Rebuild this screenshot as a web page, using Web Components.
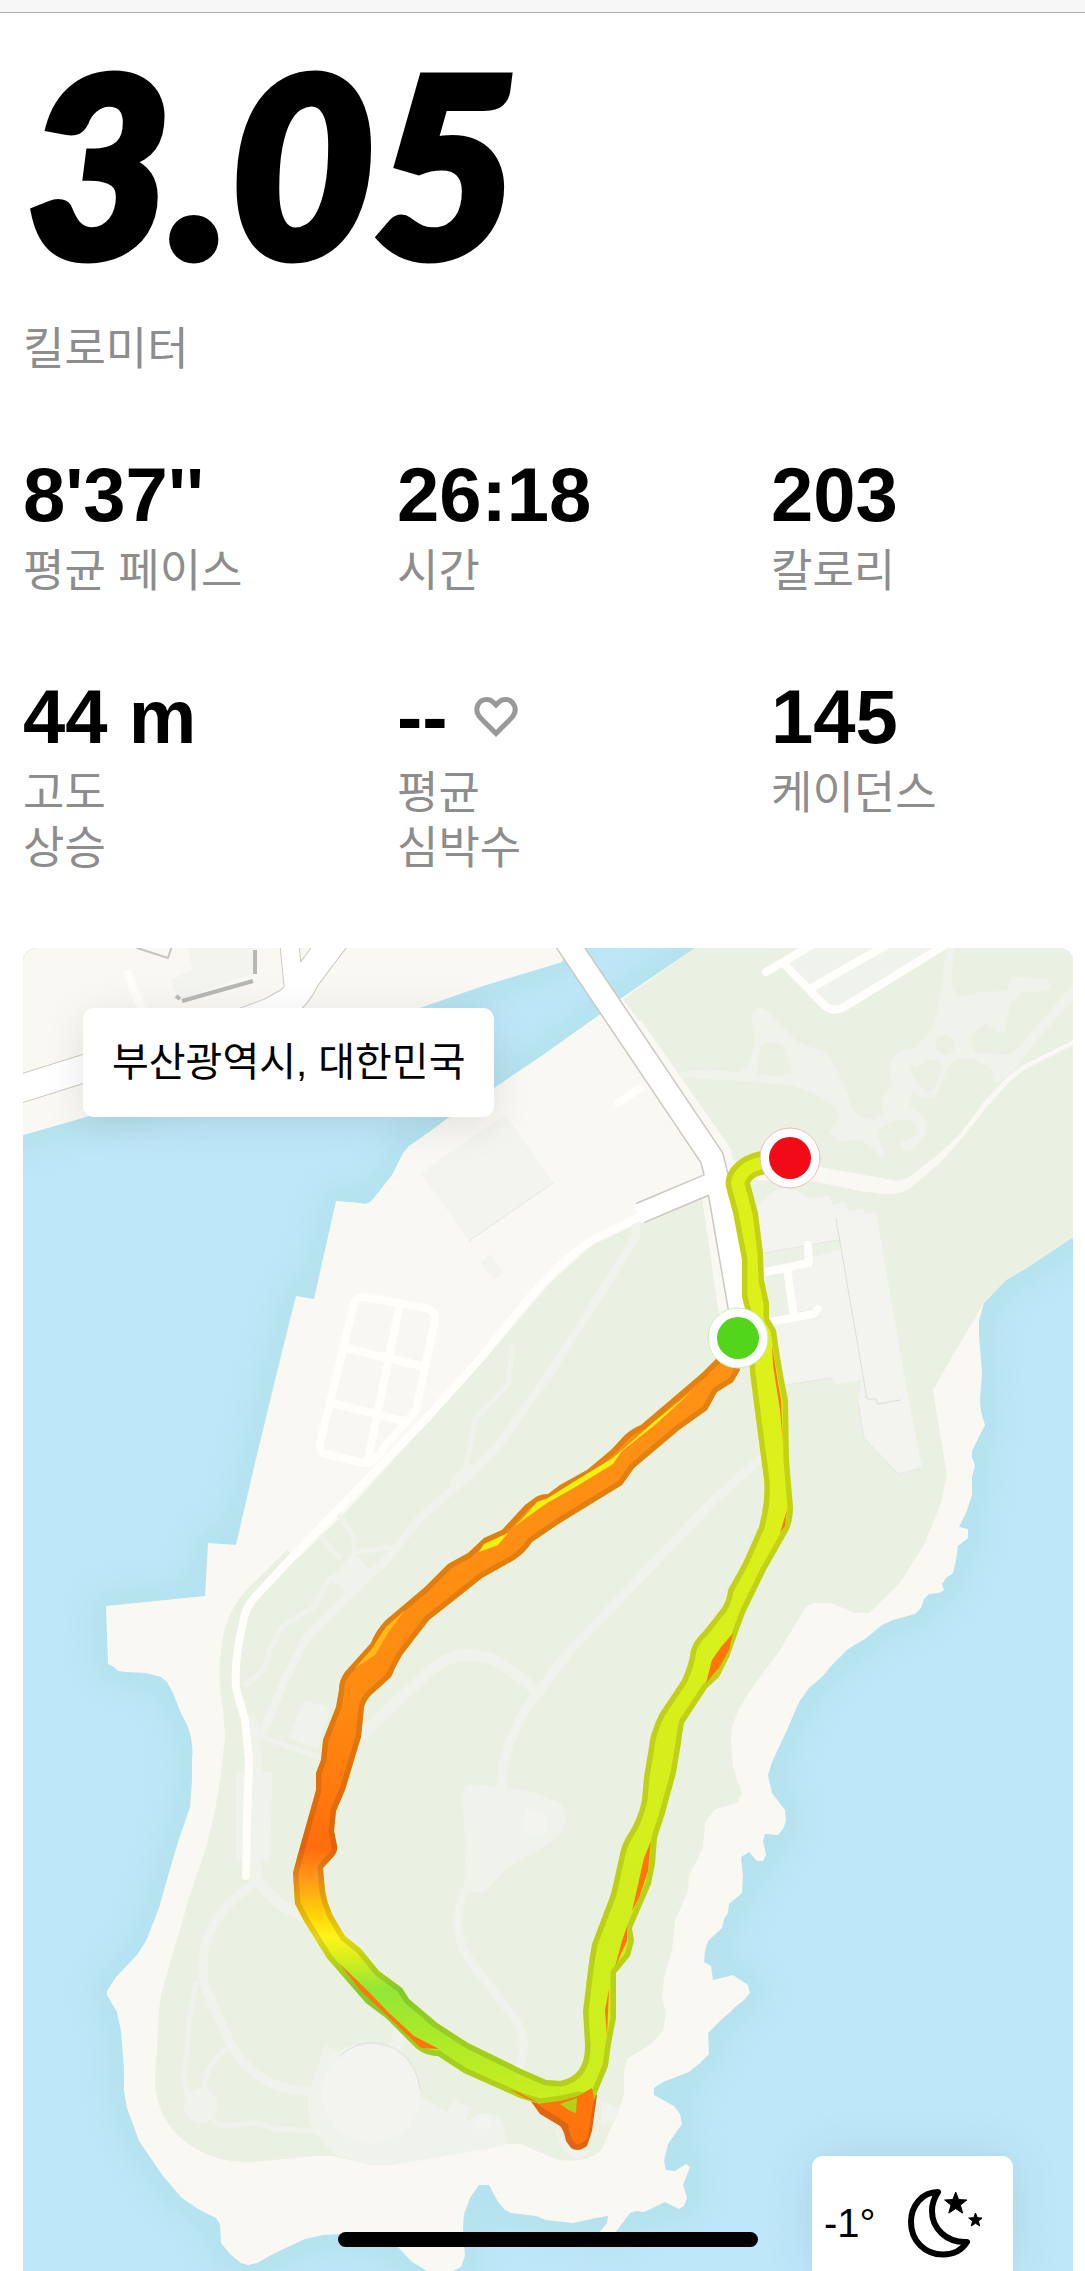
<!DOCTYPE html>
<html lang="ko">
<head>
<meta charset="utf-8">
<meta name="viewport" content="width=device-width, initial-scale=1">
<title>러닝 기록</title>
<style>
    body {
        margin: 0;
        background: #fff;
        color: #000;
        font-family: "Liberation Sans", "Noto Sans CJK KR", sans-serif;
    }
</style>
</head>
<body>
<run-summary>
    <run-distance slot="distance" value="3.05">킬로미터</run-distance>
    <run-stat value="8'37''">평균 페이스</run-stat>
    <run-stat value="26:18">시간</run-stat>
    <run-stat value="203">칼로리</run-stat>
    <run-stat value="44 m">고도<br>상승</run-stat>
    <run-stat value="--"><heart-icon slot="icon"></heart-icon>평균<br>심박수</run-stat>
    <run-stat value="145">케이던스</run-stat>
    <run-map slot="map">
        <span slot="place">부산광역시, 대한민국</span>
        <weather-card slot="weather">-1°</weather-card>
    </run-map>
</run-summary>

<script>
class RunSummary extends HTMLElement {
    constructor() {
        super();
        this.attachShadow({ mode: 'open' });
    }

    connectedCallback() {
        this.shadowRoot.innerHTML = `
            <style>
                :host { display: block; }
                header {
                    height: 12px;
                    background: #f7f7f7;
                    border-bottom: 1px solid #b2b2b2;
                }
                main { padding: 28px 12px 0 23px; }
                .stats {
                    display: grid;
                    grid-template-columns: repeat(3, minmax(0, 1fr));
                    gap: 72px;
                    padding: 72px 0;
                }
            </style>
            <header></header>
            <main>
                <slot name="distance"></slot>
                <section class="stats"><slot></slot></section>
                <slot name="map"></slot>
            </main>
        `;
    }
}

class RunDistance extends HTMLElement {
    constructor() {
        super();
        this.attachShadow({ mode: 'open' });
    }

    connectedCallback() {
        this.shadowRoot.innerHTML = `
            <style>
                :host {
                    display: flex;
                    flex-direction: column;
                    gap: 41px;
                }
                h1 {
                    margin: 0;
                    padding-left: 4px;
                    font: italic 900 248px/240px Lato, sans-serif;
                    -webkit-text-stroke: 9px #000;
                }
                p {
                    margin: 0;
                    color: #8d8d8d;
                    font-size: 45px;
                    line-height: 55px;
                }
            </style>
            <h1>${this.getAttribute('value')}</h1>
            <p><slot></slot></p>
        `;
    }
}

class RunStat extends HTMLElement {
    constructor() {
        super();
        this.attachShadow({ mode: 'open' });
    }

    connectedCallback() {
        this.shadowRoot.innerHTML = `
            <style>
                :host {
                    display: flex;
                    flex-direction: column;
                    gap: 3px;
                }
                .value {
                    display: flex;
                    align-items: center;
                    gap: 26px;
                    font-size: 76px;
                    font-weight: bold;
                    line-height: 92px;
                }
                .label {
                    color: #8d8d8d;
                    font-size: 45px;
                    line-height: 55px;
                }
            </style>
            <div class="value">${this.getAttribute('value')}<slot name="icon"></slot></div>
            <div class="label"><slot></slot></div>
        `;
    }
}

class HeartIcon extends HTMLElement {
    constructor() {
        super();
        this.attachShadow({ mode: 'open' });
    }

    connectedCallback() {
        this.shadowRoot.innerHTML = `
            <style>
                :host, svg { display: block; }
            </style>
            <svg width="44" height="42" viewBox="0 0 44 42" fill="none" stroke="#999" stroke-width="5">
                <path d="M22 37.500 7.500 23C2.500 18 2 14 3.500 10 6 3 14.500 1.500 19 6l3 3 3-3c4.500-4.500 13-3 15.500 4 1.500 4 1 8-4 13z"/>
            </svg>
        `;
    }
}

class WeatherCard extends HTMLElement {
    constructor() {
        super();
        this.attachShadow({ mode: 'open' });
    }

    connectedCallback() {
        this.shadowRoot.innerHTML = `
            <style>
                :host {
                    display: flex;
                    align-items: center;
                    gap: 30px;
                    box-sizing: border-box;
                    width: 201px;
                    height: 115px;
                    padding: 20px 12px 0;
                    border-radius: 11px 11px 0 0;
                    background: #fff;
                    box-shadow: 0 0 50px rgba(0, 0, 0, .1);
                    font-size: 40px;
                }
                svg { display: block; }
            </style>
            <span><slot></slot></span>
            <svg width="76" height="72" viewBox="906 2188 76 72">
                <path d="M938 2192C922 2192 911 2206 911 2222 911 2241 925 2254.500 943 2254.500 953 2254.500 962 2250 967 2242 946 2243 932 2228 932 2211 932 2203 934 2198 938 2192z" fill="none" stroke="#000" stroke-width="6" stroke-linejoin="round"/>
                <path stroke="#000" stroke-linejoin="round" d="M955.700 2192l2.900 7.600 8.200.4-6.400 5.100 2.200 8-6.900-4.500-6.900 4.500 2.200-8-6.400-5.100 8.200-.4zM975.500 2213l1.800 4.700 5 .3-3.900 3.100 1.300 4.900-4.200-2.800-4.200 2.800 1.300-4.900-3.900-3.100 5-.3z"/>
            </svg>
        `;
    }
}

class RunMap extends HTMLElement {
    constructor() {
        super();
        this.attachShadow({ mode: 'open' });
    }

    connectedCallback() {
        this.shadowRoot.innerHTML = `
            <style>
                :host {
                    display: block;
                    position: relative;
                    aspect-ratio: 1050 / 1323;
                    overflow: hidden;
                    border-radius: 14px 14px 0 0;
                    background: #bee8fa;
                }
                svg {
                    display: block;
                    width: 100%;
                    height: 100%;
                }
                .place {
                    position: absolute;
                    top: 60px;
                    left: 60px;
                    padding: 0 29px;
                    border-radius: 11px;
                    background: #fff;
                    box-shadow: 0 8px 40px rgba(0, 0, 0, .1);
                    font-size: 40px;
                    line-height: 109px;
                }
                .weather {
                    position: absolute;
                    right: 60px;
                    bottom: 0;
                }
                .home {
                    position: absolute;
                    right: 30%;
                    bottom: 24px;
                    left: 30%;
                    height: 15px;
                    border-radius: 8px;
                    background: #000;
                }
            </style>
            <svg viewBox="23 948 1050 1323" preserveAspectRatio="xMidYMin slice" fill="none" stroke-linecap="round" stroke-linejoin="round">
                <defs>
                    <filter id="soft" x="-10%" y="-10%" width="120%" height="120%"><feGaussianBlur stdDeviation="14"/></filter>
                    <path id="mainland" d="M10 930V1139L86 1117 420 1008 480 987 562 962 575 930z"/>
                    <path id="island" d="M725 930L695 948 620 999 599 1015 540 1057 494 1088 448 1118 429 1132 409 1146 403 1153 392 1175 373 1199Q367 1206 361 1203L336 1201 314 1299 296 1296 280 1360 255 1463 236 1545 208 1543 205 1596 106 1606 108 1664 114 1667 118 1671 126 1672 146 1673 161 1677 167 1682 173 1693 180 1711 188 1727Q194 1745 192 1760L192 1780 190 1807 179 1839 170 1869 159 1908 146 1941 137 1955 116 1977 107 1991V1995L117 2012 121 2031 124 2068V2091L127 2108 139 2141 163 2176 182 2198 198 2209 216 2218 220 2224 221 2243 230 2254 241 2263 248 2265 257 2263 275 2253 305 2239 323 2235 343 2234 398 2247 411 2261 427 2271 445 2275 461 2267 465 2256 463 2228 464 2214 470 2198 479 2185H489L498 2202 505 2210 511 2213 536 2216 546 2220 573 2223 596 2218 608 2216 607 2223 599 2233H615L630 2213 636 2211 644 2212 665 2202 679 2209 684 2206 687 2198 683 2185 690 2167 686 2164 675 2171 666 2170 664 2161 668 2144 682 2124 680 2114 674 2106 654 2095V2088L663 2082 689 2072 700 2063 709 2054 708 2033 721 2020 729 2013 735 2007 743 2001 750 1993 748 1985 733 1975 713 1980 711 1966 704 1962 705 1951 708 1941 722 1928 724 1919 728 1913 729 1904 742 1893 743 1876 741 1857 749 1852 757 1861H763L766 1855 763 1841 765 1834 778 1835 783 1829 786 1821 785 1810 772 1793 768 1775 772 1762 787 1730 799 1702 809 1688 823 1676 832 1665 848 1649 865 1639 882 1625 893 1620 915 1614 921 1608 924 1599 929 1594 939 1593 944 1590 942 1584 946 1578 953 1573 956 1560 958 1546 968 1538V1529L959 1527 966 1513 972 1495V1477L975 1466 972 1457V1451L985 1425 981 1412 980 1400 982 1373 979 1335V1320L984 1303 1006 1280 1025 1269 1090 1226V930z"/>
                    <path id="route" d="M730 1345L715 1360Q702 1374 688 1385L641 1425Q633 1428 625 1435L611 1450 587 1470 560 1485 548 1494Q541 1494 536 1497L525 1505 502 1530 484 1538 468 1553 448 1564 425 1587 386 1620Q376 1630 371 1643L345 1672Q339 1680 339 1690L336 1707 323 1740 321 1760 316 1773V1790L309 1815 298 1854 293 1873 295 1904 304 1921 327 1958 366 2003 386 2018 416 2048Q426 2056 438 2056L464 2073 500 2089 520 2098 540 2104 561 2101 578 2097 594 2100 608 2066 611 2044 616 2018V1973L630 1956 634 1941 632 1928 651 1884 655 1864 657 1838 665 1813 676 1773 681 1743Q682 1733 684 1723L707 1688 719 1677 729 1657 745 1613 766 1570 787 1533Q793 1523 793 1507L789 1460 788 1400 784 1380 780 1357 776 1330 769 1318V1303L764 1280 763 1253 758 1213 750 1183Q754 1175 768 1174L790 1170V1148L761 1151Q742 1154 731 1168 724 1178 726 1187L733 1213 742 1260V1297L748 1320 750 1373 757 1427 764 1480Q766 1500 759 1527L743 1563 728 1590Q727 1600 722 1608L703 1632Q694 1640 691 1650 689 1665 682 1680L660 1713Q655 1722 653 1730 650 1737 649 1747L644 1777 642 1800Q638 1820 627 1836 622 1844 620 1854L611 1894 592 1944Q589 1960 587 1978L583 2011 585 2044Q586 2076 560 2081L546 2080 521 2069 468 2043 437 2023 409 1999 402 1988 379 1971 361 1949 345 1936Q338 1925 332 1914 327 1903 325 1891L323 1868 334 1856Q338 1850 337 1846L334 1831 336 1811 345 1790 361 1737 364 1707Q366 1700 371 1695L391 1677Q396 1665 402 1655L429 1620 457 1598 482 1578 514 1560Q525 1553 532 1542L560 1523 622 1485 634 1468 679 1430 707 1410 717 1392 733 1382 740 1370z"/>
                    <clipPath id="route-clip"><use href="#route"/></clipPath>
                    <linearGradient id="west" gradientUnits="userSpaceOnUse" x1="0" y1="1360" x2="0" y2="2100">
                        <stop offset="0" stop-color="#ff9215"/>
                        <stop offset=".46" stop-color="#ff8b11"/>
                        <stop offset=".6" stop-color="#ff770d"/>
                        <stop offset=".66" stop-color="#ff6d0d"/>
                        <stop offset=".7" stop-color="#ff981b"/>
                        <stop offset=".75" stop-color="#ffd307"/>
                        <stop offset=".78" stop-color="#fff41a"/>
                        <stop offset=".81" stop-color="#d4ee1d"/>
                        <stop offset=".85" stop-color="#93e637"/>
                        <stop offset=".9" stop-color="#a6e92b"/>
                        <stop offset="1" stop-color="#ccee1e"/>
                    </linearGradient>
                    <linearGradient id="east" gradientUnits="userSpaceOnUse" x1="0" y1="1500" x2="0" y2="2100">
                        <stop offset="0" stop-color="#dcf01a"/>
                        <stop offset="1" stop-color="#ccee1e"/>
                    </linearGradient>
                </defs>

                <!-- sea and land -->
                <rect x="22" y="948" width="1052" height="1323" fill="#bee8fa"/>
                <g stroke="#b5e2ef" stroke-width="44" filter="url(#soft)">
                    <use href="#mainland"/>
                    <use href="#island"/>
                </g>
                <g fill="#faf8f3">
                    <use href="#mainland"/>
                    <use href="#island"/>
                </g>

                <!-- park -->
                <path fill="#ebf1e2" d="M725 930L695 948 623 999 677 1073 721 1140 730 1160 735 1290 709 1197 641 1222 592 1245 550 1283 484 1360 343 1515 296 1560 287 1550 246 1590Q224 1615 221 1650 217 1675 223 1710L225 1737 221 1773 215 1811 205 1851 189 1898 164 1984Q158 2005 158 2030L155 2078Q155 2125 196 2149 220 2163 250 2162L318 2156H332L370 2164H393L504 2144H520L556 2159Q570 2163 589 2158 600 2153 603 2147L619 2109 624 2094V2073L627 2059 651 2044 663 2031 666 2012 662 1999 664 1978 672 1951 675 1921 688 1891 689 1876 703 1848 705 1823 714 1810 737 1803 742 1793 733 1767 731 1740 732 1727 740 1707 754 1685 778 1653 806 1607 814 1603H831L855 1613H870L875 1607 900 1583 925 1543 941 1503 947 1475 933 1390 950 1360 984 1303 1006 1280 1025 1269 1090 1226V930z"/>
                <path fill="#faf8f3" d="M728 1160L820 1167 898 1181 908 1178 922 1167Q945 1150 961 1133L983 1103 1006 1078 1023 1065 1075 1039V1044L1025 1069 1008 1083 985 1109 963 1137Q940 1165 915 1184 905 1195 884 1194L860 1191 818 1182 750 1180z"/>

                <!-- clearings and footpaths -->
                <path fill="#f0f3eb" d="M681 1072Q710 1068 740 1073L749 1063 756 1043 751 1017Q754 1002 769 1013L797 1042 825 1052Q843 1075 851 1107 860 1122 875 1119L884 1112 881 1100 893 1085Q884 1059 900 1052L917 1047 931 1030Q943 1000 946 940H955L951 985Q955 998 964 997L980 992 1007 991 1011 977 1046 979Q1054 985 1046 991L1021 992 1011 1003 1004 1032H997L987 1023Q965 1032 974 1053L1009 1055Q1020 1048 1027 1037L1075 982V998L1037 1040 1016 1067 995 1085 992 1070Q970 1050 950 1063L934 1098Q920 1100 912 1090L910 1107Q933 1118 925 1135L912 1150H901V1142Q920 1138 917 1125 905 1113 879 1128L877 1138 886 1155 881 1158Q868 1140 856 1140L839 1141 829 1132 839 1118Q838 1100 794 1086L756 1082 681 1077z"/>
                <g fill="#ebf1e2">
                    <path d="M760 1046Q770 1040 783 1045L792 1073Q775 1079 756 1073z"/>
                    <circle cx="945" cy="1045" r="10"/>
                    <path d="M909 1063l8 5 8-7q14-6 17 9l-9 21q-9 3-20-15z"/>
                </g>
                <g stroke="#f0f3eb">
                    <path stroke-width="8" d="M636 1220V1237L592 1307 547 1377 500 1443 475 1470 421 1517 386 1560 350 1593 307 1637 286 1677 264 1730"/>
                    <path stroke-width="5" d="M512 1345L509 1383 475 1420 466 1467M339 1515L354 1537V1553M321 1537L339 1557M355 1553L389 1547M330 1578L314 1607 282 1627 271 1647 264 1670 246 1685M262 1737L321 1758"/>
                    <path stroke-width="11" d="M364 1733L425 1675Q462 1640 505 1666L539 1692M252 1720L257 1773 256 1878Q270 1902 304 1916"/>
                    <path stroke-width="9" d="M759 1460L714 1500 568 1653 540 1690Q500 1740 502 1790M254 1884Q195 1920 204 1984L229 2041Q255 2090 307 2091"/>
                    <path stroke-width="8" d="M464 1891Q450 1930 468 1958L514 2018Q530 2040 520 2065"/>
                    <path stroke-width="5" d="M196 1984L189 2024 184 2078 188 2098M229 2048Q205 2062 204 2091M214 2121L221 2126 257 2123 275 2129 318 2131"/>
                </g>
                <g fill="#f0f3eb">
                    <path d="M450 1478l18-14 10 5-12 15-14 3zM354 1553l19 20-23 22-20-17zM236 1772h36l-2 89h-34zM304 1700l26 8-12 40-29-10z"/>
                    <path d="M461 1793Q465 1783 479 1785L500 1787 536 1793 560 1803Q570 1815 560 1835L540 1849 507 1868 484 1892H464L466 1844z"/>
                    <circle cx="201" cy="2106" r="17"/>
                    <path d="M325 2045l12 6q30-14 50-1l8-22 12 10-8 20 20 38 28 16 7-12 16 8-5 15 15-10q20 0 24 12l3 18-3 3-111 19h-23l-34-10q-36-28-26-65z"/>
                    <path d="M601 2100l18 9-4 12-14 5zM555 2125q10 28 35 26l-12 8q-20-4-23-34z"/>
                </g>
                <g fill="#f3f4ef">
                    <circle cx="371" cy="2094" r="49"/>
                    <circle cx="534" cy="1823" r="13"/>
                    <circle cx="482" cy="2122" r="8"/>
                </g>
                <path stroke="#e0e1dd" d="M340 2056q30-26 63-2 15 14 17 36"/>

                <!-- buildings -->
                <g fill="#f3f4ef">
                    <path d="M421 1173L505 1114 553 1183 469 1241zM480 1262l10-8 13 18-9 8zM187 948H257L256 973 179 1000 171 979 193 970z"/>
                    <path d="M757 1207L769 1195Q787 1180 808 1198L830 1196 832 1205 846 1202 849 1212 863 1208 864 1214 876 1212 905 1380 922 1468 898 1474 864 1438 858 1402 862 1380 836 1384 832 1378 785 1385 770 1340z"/>
                </g>
                <path fill="#ecf1e6" d="M764 1253L805 1245 840 1240V1250L813 1257 815 1266 788 1272 796 1312 818 1308 823 1318 769 1325z"/>
                <path stroke="#dcdcda" d="M836 1219L867 1399H876L878 1404 900 1400"/>
                <path stroke="#e6e7e3" d="M764 1253L838 1240M469 1241L553 1183M858 1402L864 1438 898 1474 922 1468M785 1385L832 1378"/>
                <path fill="#f8f7f4" d="M361 1296L432 1308 413 1418 371 1463 320 1453z"/>
                <path fill="#f0f3eb" d="M783 963L812 948H940L844 1007 833 1012z"/>

                <!-- minor roads -->
                <g stroke="#fffefa" stroke-width="8">
                    <path d="M766 972L815 943M783 963L825 1006Q833 1013 844 1007L950 942M813 987L890 943M618 1103L648 1083M128 974L142 1010M765 1272L809 1263 808 1245M787 1268L794 1317M769 1322L814 1314 818 1309"/>
                    <path d="M366 1297L426 1308Q436 1311 435 1320L416 1410 386 1445Q374 1464 364 1463L326 1454Q318 1452 320 1444L354 1303Q358 1295 366 1297zM400 1303L368 1460M346 1348L425 1367M332 1403L407 1422"/>
                    <path d="M645 1214L592 1240Q560 1262 530 1297L479 1360 425 1420 386 1460 296 1553 255 1597Q245 1608 243 1623 234 1660 236 1688L245 1720 249 1760 247 1820 246 1876"/>
                </g>

                <!-- main roads -->
                <path stroke="#faf8f3" stroke-width="36" stroke-linecap="butt" d="M626 1030L714 1156 738 1320"/>
                <g stroke-linecap="butt">
                    <g stroke="#cdc8c1">
                        <path stroke-width="25" d="M564 938L712 1158 719 1187 742 1320"/>
                        <path stroke-width="22" d="M640 1213L714 1182"/>
                        <path stroke-width="29" d="M10 1092L86 1068 240 1023M200 1038L270 1012 288 1002Q298 995 306 978L342 930"/>
                        <path stroke-width="20" d="M288 930L294 990"/>
                    </g>
                    <g stroke="#fff">
                        <path stroke-width="22" d="M564 938L712 1158 719 1187 742 1320"/>
                        <path stroke-width="19" d="M638 1214L718 1180"/>
                        <path stroke-width="27" d="M10 1092L86 1068 240 1023M200 1038L270 1012 288 1002Q298 995 306 978L342 930"/>
                        <path stroke-width="18" d="M288 930L294 990"/>
                    </g>
                </g>
                <path stroke="#b7b7b6" stroke-width="4" stroke-linecap="butt" d="M182 1001L253 981M176 996l4 3M255 950V974"/>
                <path stroke="#c6c4c0" stroke-width="2" d="M137 948L168 958 172 946"/>

                <!-- run track -->
                <path fill="#df6413" d="M530 2100L540 2114 560 2126Q564 2130 566 2141L571 2148Q578 2153 587 2146L592 2131 597 2095 575 2080z"/>
                <use href="#route" fill="url(#east)"/>
                <path clip-path="url(#route-clip)" fill="url(#west)" d="M0 1330H742L746 1400 700 1450 600 1800 560 2000V2300H0z"/>
                <use href="#route" clip-path="url(#route-clip)" stroke="#3c2800" stroke-opacity=".15" stroke-width="11"/>
                <path fill="#ff750d" d="M537 2104L561 2101 578 2096 592 2088 594 2098 588 2135Q586 2143 578 2144 571 2144 568 2124z"/>
                <path fill="#b2d119" d="M560 2104L577 2098 576 2113 570 2111z"/>
                <path fill="#f2f114" d="M692 1391L655 1421 613 1458 575 1481 540 1503 540 1507 577 1486 613 1464 622 1451 656 1424zM560 1494L537 1502 523 1518 514 1527 530 1515zM508 1533L484 1544 479 1552 498 1545z"/>
                <path fill="#ffb916" d="M405 1610L386 1627 371 1650 355 1668 375 1655 388 1633z"/>
                <g fill="#ff760d">
                    <path d="M733 1633L721 1647 712 1660 706 1683 719 1668 729 1650zM651 1841L644 1858 632 1911 639 1898 648 1871zM627 1926V1941L615 1967 622 1941zM339 1963L368 1991 389 2013 414 2036 439 2049 421 2048 400 2028 361 1991zM509 2089L520 2093 539 2103 525 2098z"/>
                    <path d="M772 1345L778 1383 781 1400 783 1443 780 1410 773 1365zM787 1510L780 1533 785 1526zM609 1989L607 2036 605 2010z"/>
                </g>

                <!-- start and finish -->
                <g fill="#fff">
                    <circle cx="790" cy="1158" r="30" stroke="#f3b9b9" stroke-width="1"/>
                    <circle cx="738" cy="1338" r="30" stroke="#c9efbb" stroke-width="1"/>
                </g>
                <circle cx="790" cy="1158" r="21" fill="#f20a17"/>
                <circle cx="738" cy="1338" r="21" fill="#53d51b"/>
            </svg>
            <div class="place"><slot name="place"></slot></div>
            <div class="weather"><slot name="weather"></slot></div>
            <div class="home"></div>
        `;
    }
}

customElements.define('heart-icon', HeartIcon);
customElements.define('weather-card', WeatherCard);
customElements.define('run-distance', RunDistance);
customElements.define('run-stat', RunStat);
customElements.define('run-map', RunMap);
customElements.define('run-summary', RunSummary);
</script>
</body>
</html>
